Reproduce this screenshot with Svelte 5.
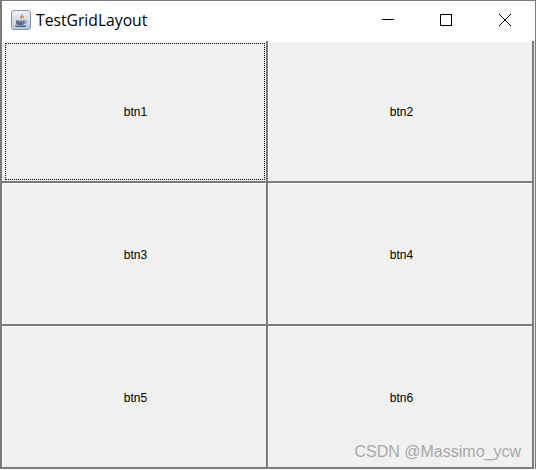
<script lang="ts">
  const buttons = ["btn1", "btn2", "btn3", "btn4", "btn5", "btn6"];
</script>

<div class="window">
  <!-- Title bar -->
  <div class="titlebar">
    <svg class="app-icon" width="20" height="20" viewBox="0 0 20 20">
      <defs>
        <linearGradient id="tile" x1="0" y1="0" x2="0" y2="1">
          <stop offset="0" stop-color="#eef2f6" />
          <stop offset="1" stop-color="#b4c6d9" />
        </linearGradient>
      </defs>
      <rect x="0.5" y="0.5" width="19" height="19" rx="2.5" fill="url(#tile)" stroke="#8296ab" />
      <path d="M11 2.500c1.200 1.800-2.600 3-1.300 5.200 .5 1-.2 1.600-.2 1.600 2.300-.9 2.300-2.300 1.600-3.500-.5-1 1.100-1.800-.1-3.300z" fill="#e2661c" />
      <path d="M13 5c-1.100.8-1.600 1.700-.9 2.800.3.600 0 1.100-.3 1.400 1.600-.7 1.700-1.800 1.100-2.600-.3-.5-.3-1 .1-1.600z" fill="#ea8b3c" />
      <path d="M5 10.500h8.500v2.200c0 1.300-1 2.200-2.200 2.200H7.200c-1.200 0-2.200-.9-2.200-2.200z" fill="#566a84" />
      <path d="M6.500 11.500h5.500v1c0 .8-.6 1.400-1.300 1.400" fill="none" stroke="#8fa3b8" stroke-width="0.600" />
      <path d="M13.500 11h1.300c1.100 0 1.100 2.100-1.500 2.400" fill="none" stroke="#566a84" stroke-width="0.800" />
      <path d="M3.500 15.500h12c-.5 1.100-1.600 1.500-3.200 1.500H6.700c-1.600 0-2.700-.4-3.200-1.500z" fill="#4f627b" />
    </svg>
    <span class="title">TestGridLayout</span>
    <div class="controls">
      <svg width="12" height="12" viewBox="0 0 12 12">
        <path d="M0 5.500h12" stroke="#000" fill="none" />
      </svg>
      <svg width="12" height="12" viewBox="0 0 12 12">
        <rect x="0.500" y="0.500" width="11" height="11" stroke="#000" fill="none" />
      </svg>
      <svg class="close" width="12" height="12" viewBox="0 0 12 12">
        <path d="M0 0l12 12M12 0L0 12" stroke="#000" fill="none" />
      </svg>
    </div>
  </div>

  <!-- Grid -->
  <div class="grid">
    {#each buttons as label, index}
      <button class="btn" class:focused={index === 0}>
        <span>{label}</span>
      </button>
    {/each}
  </div>

  <div class="watermark">CSDN @Massimo_ycw</div>
</div>

<style>
  :global(body) {
    margin: 0;
    background: #fff;
  }

  .window {
    position: relative;
    width: 536px;
    height: 469px;
    box-sizing: border-box;
    border: 1px solid #7a7a7a;
    border-left-width: 2px;
    border-bottom: none;
    background: #fff;
    overflow: hidden;
    font-family: "Liberation Sans", Arial, sans-serif;
  }

  .titlebar {
    display: flex;
    align-items: center;
    box-sizing: border-box;
    height: 40px;
    padding-left: 9px;
    padding-bottom: 2px;
    background: #fff;
  }

  .app-icon {
    flex-shrink: 0;
  }

  .title {
    margin-left: 5px;
    font-family: "Open Sans", "Noto Sans", sans-serif;
    font-size: 15.7px;
    color: #000;
  }

  .controls {
    display: flex;
    gap: 46px;
    margin-left: auto;
    margin-right: 24px;
  }

  .close {
    margin-left: 1px;
  }

  .grid {
    display: grid;
    grid-template-columns: 266px 266px;
    grid-template-rows: 142px 143px 143px;
    background: #f0f0f0;
  }

  .btn {
    position: relative;
    display: flex;
    align-items: center;
    justify-content: center;
    margin: 0;
    padding: 1px 0 0 3px;
    box-sizing: border-box;
    background: #f0f0f0;
    border: none;
    border-right: 2px solid #7c7c7c;
    border-bottom: 2px solid #7c7c7c;
    box-shadow: inset 1px 1px 0 #fff;
    font-family: "Liberation Sans", Arial, sans-serif;
    font-size: 12px;
    color: #000;
  }

  .btn:nth-child(n + 3) {
    padding-top: 2px;
  }

  .focused::after {
    content: "";
    position: absolute;
    inset: 2px 1px 1px 3px;
    border: 1px dotted #000;
  }

  .watermark {
    position: absolute;
    right: 14px;
    bottom: 8px;
    font-size: 16px;
    color: #a8a8a8;
  }
</style>
